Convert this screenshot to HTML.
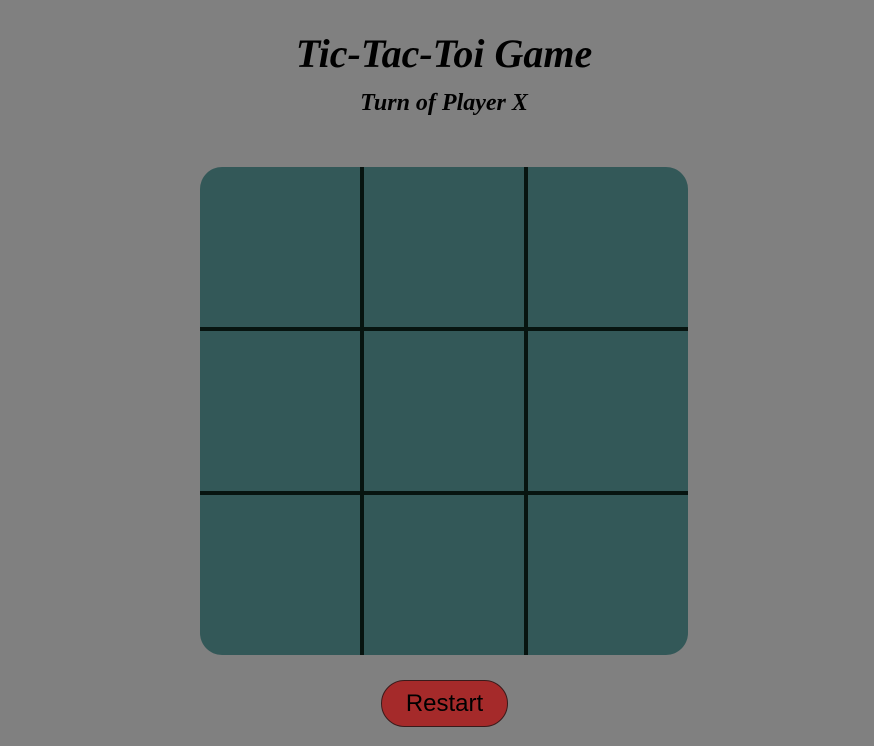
<!DOCTYPE html>
<html><head><style>
html,body{margin:0;padding:0;width:874px;height:746px;background:#808080;overflow:hidden}
h1{position:absolute;left:0;width:888px;top:30px;margin:0;text-align:center;font:italic bold 40px "Liberation Serif",serif;color:#000}
h2{position:absolute;left:0;width:888px;top:90px;margin:0;text-align:center;font:italic bold 24px "Liberation Serif",serif;color:#000}
.board{position:absolute;left:200px;top:167px;width:488px;height:488px;background:#335858;border-radius:22px;overflow:hidden}
.v,.h{position:absolute;background:#071410}
.v{top:0;width:4px;height:488px}
.h{left:0;height:4px;width:488px}
.btn{position:absolute;left:381px;top:680px;width:127px;height:47px;box-sizing:border-box;background:#a52a2a;border:1px solid #3a1a1a;border-radius:24px;text-align:center;font:24px/45px "Liberation Sans",sans-serif;color:#000}
</style></head><body>
<h1>Tic-Tac-Toi Game</h1>
<h2>Turn of Player X</h2>
<div class="board">
<div class="v" style="left:160px"></div>
<div class="v" style="left:324px"></div>
<div class="h" style="top:160px"></div>
<div class="h" style="top:324px"></div>
</div>
<div class="btn">Restart</div>
</body></html>
